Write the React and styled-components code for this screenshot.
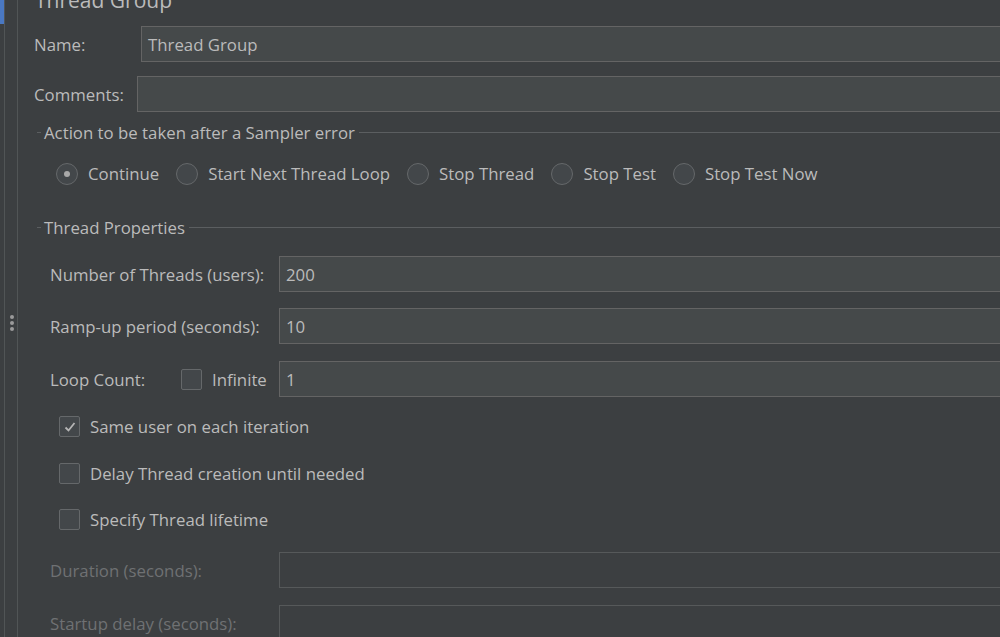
import styled, { createGlobalStyle } from 'styled-components'

const GlobalStyle = createGlobalStyle`
  html, body {
    margin: 0;
    padding: 0;
    background: #3c3f41;
    overflow: hidden;
  }
  * { box-sizing: border-box; }
`;

const Page = styled.div`
  display: flex;
  height: 637px;
  width: 1000px;
  background: #3c3f41;
  color: #bbbbbb;
  font-family: "Open Sans", "Noto Sans", sans-serif;
  font-size: 16.8px;
  overflow: hidden;
`;

const Edge = styled.div`
  width: 4px;
  flex-shrink: 0;
`;

const ActiveMark = styled.div`
  height: 24px;
  background: #4a78c2;
`;

const Gutter = styled.div`
  width: 14px;
  flex-shrink: 0;
  border-left: 1px solid #515556;
  border-right: 1px solid #515556;
  display: flex;
  flex-direction: column;
  align-items: center;
  justify-content: center;
  padding-top: 8px;
  padding-left: 1px;
  gap: 2px;
`;

const Dot = styled.span`
  width: 4px;
  height: 4px;
  border-radius: 50%;
  background: #9a9a9a;
`;

const Main = styled.div`
  flex: 1;
  min-width: 0;
  display: flex;
  flex-direction: column;
  padding-left: 16px;
  overflow: hidden;
`;

const Title = styled.div`
  font-size: 21px;
  line-height: 20px;
  height: 20px;
  margin-top: -10px;
  padding-left: 1px;
  white-space: nowrap;
`;

const Row = styled.div`
  display: flex;
  align-items: center;
  height: ${p => p.$h || 36}px;
  margin-top: ${p => p.$top}px;
  padding-left: ${p => p.$indent || 0}px;
  margin-right: -10px;
  white-space: nowrap;
`;

const Label = styled.div`
  width: ${p => p.$w}px;
  flex-shrink: 0;
  color: ${p => (p.$disabled ? '#6f7173' : '#bbbbbb')};
`;

const Field = styled.div`
  flex: 1;
  height: 36px;
  background: ${p => (p.$disabled ? '#3c3f41' : '#45494a')};
  border: 1px solid ${p => (p.$disabled ? '#56595a' : '#646464')};
  display: flex;
  align-items: center;
  padding-left: 6px;
  color: #bbbbbb;
`;

const SectionHead = styled.div`
  display: flex;
  align-items: center;
  height: 20px;
  margin-top: ${p => p.$top}px;
  margin-left: 3px;
  white-space: nowrap;

  &::before {
    content: '';
    width: 4px;
    height: 1px;
    background: #5b5e60;
    margin-right: 3px;
  }
  &::after {
    content: '';
    flex: 1;
    height: 1px;
    background: #5b5e60;
    margin-left: 4px;
  }
`;

const RadioGroup = styled.div`
  display: flex;
  align-items: center;
  height: 24px;
  margin-top: ${p => p.$top}px;
  padding-left: 22px;
  gap: 17px;
  white-space: nowrap;
`;

const Choice = styled.label`
  display: flex;
  align-items: center;
  gap: 10px;
`;

const Radio = styled.span`
  width: 22px;
  height: 22px;
  border-radius: 50%;
  border: 1px solid #65686a;
  background: #43474a;
  display: flex;
  align-items: center;
  justify-content: center;

  &::after {
    content: '';
    display: ${p => (p.$on ? 'block' : 'none')};
    width: 6px;
    height: 6px;
    border-radius: 50%;
    background: #a9a9a9;
  }
`;

const Box = styled.span`
  width: 21px;
  height: 21px;
  flex-shrink: 0;
  border: 1px solid #65686a;
  border-radius: 2px;
  background: #43474a;
  display: flex;
  align-items: center;
  justify-content: center;
  margin-right: ${p => p.$gap || 10}px;
`;

const Check = () => (
  <svg width="14" height="14" viewBox="0 0 14 14">
    <path d="M2.5 7.5 L5.5 10.5 L11.5 3" fill="none" stroke="#b5b5b5" strokeWidth="1.8" />
  </svg>
);

const radios = ['Continue', 'Start Next Thread Loop', 'Stop Thread', 'Stop Test', 'Stop Test Now'];

export default function App() {
  return (
    <>
      <GlobalStyle />
      <Page>
        <Edge>
          <ActiveMark />
        </Edge>
        <Gutter>
          <Dot />
          <Dot />
          <Dot />
        </Gutter>
        <Main>
          <Title>Thread Group</Title>

          <Row $top={16}>
            <Label $w={107}>Name:</Label>
            <Field>Thread Group</Field>
          </Row>
          <Row $top={14}>
            <Label $w={103}>Comments:</Label>
            <Field />
          </Row>

          <SectionHead $top={10}>Action to be taken after a Sampler error</SectionHead>
          <RadioGroup $top={20}>
            {radios.map((r, i) => (
              <Choice key={r}>
                <Radio $on={i === 0} />
                {r}
              </Choice>
            ))}
          </RadioGroup>

          <SectionHead $top={32}>Thread Properties</SectionHead>

          <Row $top={19} $indent={16}>
            <Label $w={229}>Number of Threads (users):</Label>
            <Field>200</Field>
          </Row>
          <Row $top={16} $indent={16}>
            <Label $w={229}>Ramp-up period (seconds):</Label>
            <Field>10</Field>
          </Row>
          <Row $top={17} $indent={16}>
            <Label $w={131}>Loop Count:</Label>
            <Box />
            <Label $w={67}>Infinite</Label>
            <Field>1</Field>
          </Row>

          <Row $top={18} $h={24} $indent={25}>
            <Box><Check /></Box>
            Same user on each iteration
          </Row>
          <Row $top={24} $h={24} $indent={25}>
            <Box />
            Delay Thread creation until needed
          </Row>
          <Row $top={23} $h={24} $indent={25}>
            <Box />
            Specify Thread lifetime
          </Row>

          <Row $top={21} $indent={16}>
            <Label $w={229} $disabled>Duration (seconds):</Label>
            <Field $disabled />
          </Row>
          <Row $top={17} $indent={16}>
            <Label $w={229} $disabled>Startup delay (seconds):</Label>
            <Field $disabled />
          </Row>
        </Main>
      </Page>
    </>
  );
}
